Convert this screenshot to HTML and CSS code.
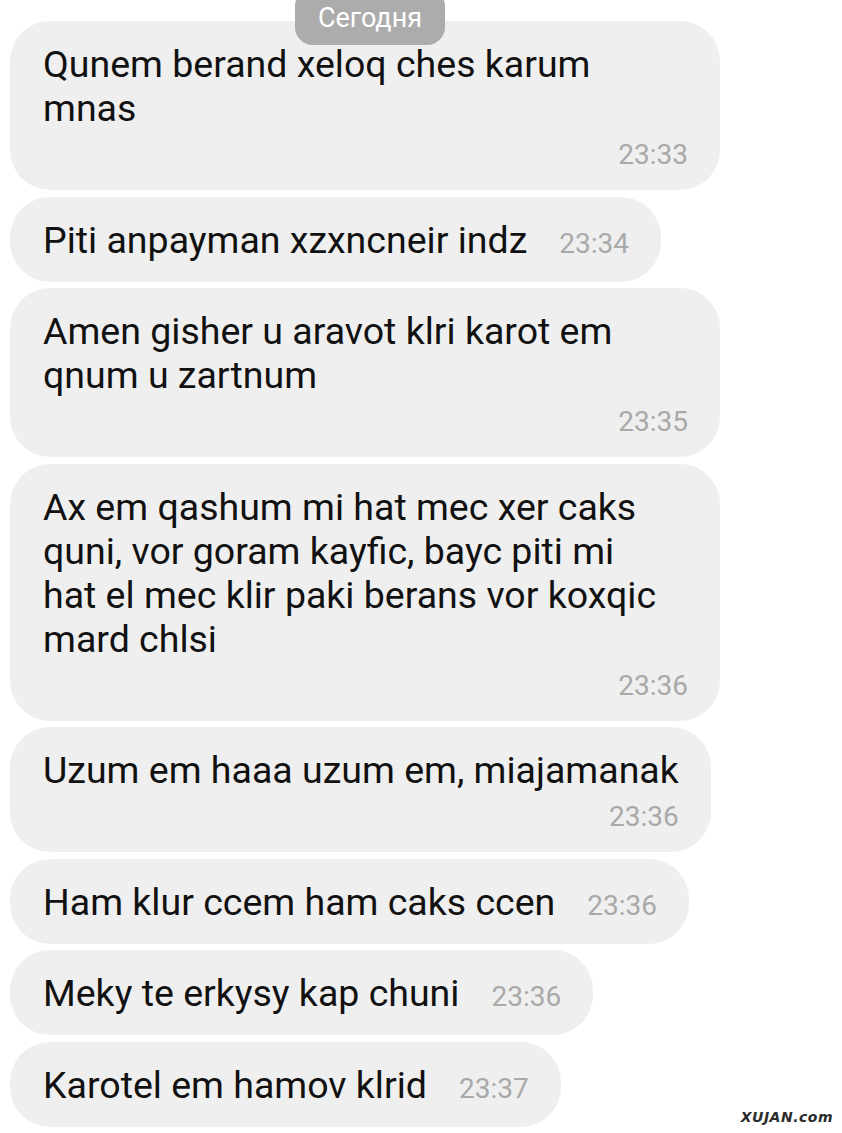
FILE: index.html
```html
<!DOCTYPE html>
<html lang="ru">
<head>
  <meta charset="UTF-8" />
  <meta name="viewport" content="width=device-width, initial-scale=1.0"/>
  <title>Чат</title>
  <link rel="stylesheet" href="styles.css">
</head>
<body>
  <div class="chat">
    <!-- floating date header -->
    <div class="date-pill">Сегодня</div>

    <div class="messages">
      <div class="bubble stacked">
        <p class="text">Qunem berand xeloq ches karum mnas</p>
        <span class="time">23:33</span>
      </div>
      <div class="bubble">
        <p class="text">Piti anpayman xzxncneir indz</p>
        <span class="time">23:34</span>
      </div>
      <div class="bubble stacked">
        <p class="text">Amen gisher u aravot klri karot em qnum u zartnum</p>
        <span class="time">23:35</span>
      </div>
      <div class="bubble stacked full">
        <p class="text">Ax em qashum mi hat mec xer caks<br>quni, vor goram kayfic, bayc piti mi<br>hat el mec klir paki berans vor koxqic<br>mard chlsi</p>
        <span class="time">23:36</span>
      </div>
      <div class="bubble stacked">
        <p class="text">Uzum em haaa uzum em, miajamanak</p>
        <span class="time">23:36</span>
      </div>
      <div class="bubble">
        <p class="text">Ham klur ccem ham caks ccen</p>
        <span class="time">23:36</span>
      </div>
      <div class="bubble">
        <p class="text">Meky te erkysy kap chuni</p>
        <span class="time">23:36</span>
      </div>
      <div class="bubble">
        <p class="text">Karotel em hamov klrid</p>
        <span class="time">23:37</span>
      </div>
    </div>

    <div class="watermark">XUJAN.com</div>
  </div>
</body>
</html>
```

FILE: styles.css
```css
* {
  box-sizing: border-box;
  margin: 0;
  padding: 0;
}
body {
  font-family: Roboto, 'Noto Sans', sans-serif;
  background: #fff;
  color: #111;
}

.chat {
  position: relative;
  width: 842px;
  height: 1133px;
  overflow: hidden;
}

/* Date header floating over the first message */
.date-pill {
  position: absolute;
  top: -12px;
  left: 295px;
  width: 150px;
  height: 57px;
  padding-top: 14px;
  border-radius: 18px;
  background: #acacac;
  color: #fff;
  font-size: 27px;
  line-height: 32px;
  text-align: center;
}

.messages {
  display: flex;
  flex-direction: column;
  align-items: flex-start;
  gap: 6.5px;
  padding: 21px 0 0 10px;
}

/* Message bubble */
.bubble {
  display: flex;
  align-items: baseline;
  gap: 32px;
  max-width: 710px;
  padding: 21px 32px 20px 33px;
  border-radius: 40px;
  background: #efefef;
}
.bubble .text {
  font-size: 37.5px;
  line-height: 44px;
}
.bubble .time {
  font-size: 28px;
  line-height: 30px;
  color: #a9a9a9;
  white-space: nowrap;
}

/* Multi-line messages put the time on its own row */
.bubble.stacked {
  flex-direction: column;
  align-items: stretch;
  gap: 10px;
}
.bubble.stacked .time {
  align-self: flex-end;
}
.bubble.full {
  width: 710px;
}

.watermark {
  position: absolute;
  right: 9px;
  bottom: 8px;
  font-family: 'DejaVu Sans', Verdana, sans-serif;
  font-size: 14px;
  font-weight: bold;
  font-style: italic;
  color: #2b2b2b;
  letter-spacing: 0.5px;
}
```
